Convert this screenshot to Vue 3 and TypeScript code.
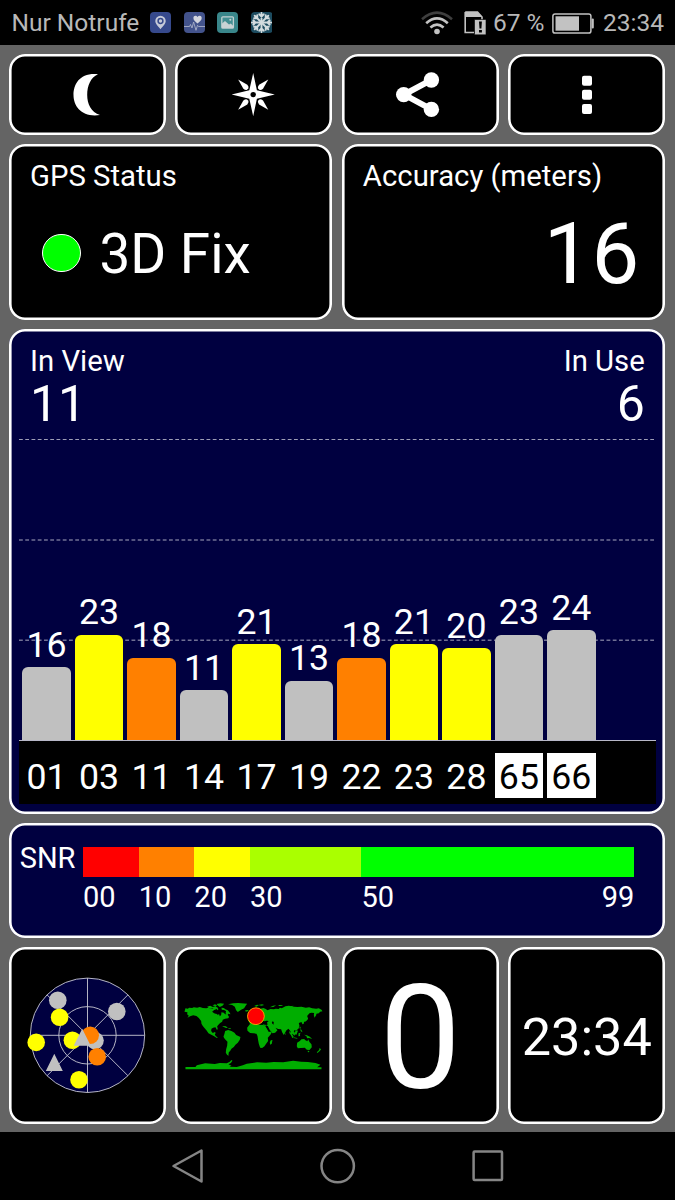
<script setup lang="ts">
interface Satellite {
  id: string
  snr: number
  color: string
  boxed?: boolean
}

const GREY = '#c0c0c0'
const YELLOW = '#ffff00'
const ORANGE = '#ff8000'
const PX_PER_DB = 4.6

const satellites: Satellite[] = [
  { id: '01', snr: 16, color: GREY },
  { id: '03', snr: 23, color: YELLOW },
  { id: '11', snr: 18, color: ORANGE },
  { id: '14', snr: 11, color: GREY },
  { id: '17', snr: 21, color: YELLOW },
  { id: '19', snr: 13, color: GREY },
  { id: '22', snr: 18, color: ORANGE },
  { id: '23', snr: 21, color: YELLOW },
  { id: '28', snr: 20, color: YELLOW },
  { id: '65', snr: 23, color: GREY, boxed: true },
  { id: '66', snr: 24, color: GREY, boxed: true },
]

const scale = [
  { label: '00', span: 10, color: '#ff0000' },
  { label: '10', span: 10, color: '#ff8000' },
  { label: '20', span: 10, color: '#ffff00' },
  { label: '30', span: 20, color: '#aaff00' },
  { label: '50', span: 49, color: '#00ff00', end: '99' },
]

const skyDots = [
  { x: 57.8, y: 1000.2, color: GREY },
  { x: 116.8, y: 1011.5, color: GREY },
  { x: 59.6, y: 1017.3, color: YELLOW },
  { x: 36.2, y: 1042.4, color: YELLOW },
  { x: 72.4, y: 1040.3, color: YELLOW },
  { x: 95, y: 1040.6, color: GREY },
  { x: 90.2, y: 1035.3, color: ORANGE },
  { x: 97.2, y: 1056.8, color: ORANGE },
  { x: 79, y: 1079.8, color: YELLOW },
]
</script>

<template>
  <div class="phone">
    <header class="status">
      <span class="carrier">Nur Notrufe</span>
      <div class="notes">
        <svg viewBox="0 0 21 21" class="note">
          <rect width="21" height="21" rx="4" fill="#36498c" />
          <path d="M10.5 17.2C8 13.8 5.3 11.6 5.3 8.9a5.2 5.2 0 0 1 10.4 0c0 2.700-2.700 4.900-5.200 8.300z" fill="#c6cad8" />
          <circle cx="10.500" cy="9" r="2.400" fill="none" stroke="#36498c" stroke-width="1.500" />
        </svg>
        <svg viewBox="0 0 21 21" class="note">
          <rect width="21" height="21" rx="4" fill="#43538c" />
          <path d="M13.500 11.500C11 9.200 9.400 8 9.400 6c0-2.700 3-3.100 4.100-1.100 1.200-2 4.200-1.600 4.200 1.100 0 2-1.700 3.200-4.200 5.500z" fill="#d4d6df" />
          <path d="M0 14.500h5.500l1-2 1.500 3.500 1.600-6 2.400 8.300 1.500-5 1 1.200H21" fill="none" stroke="#a9b0c8" stroke-width=".9" />
        </svg>
        <svg viewBox="0 0 21 21" class="note">
          <rect width="21" height="21" rx="4" fill="#39868a" />
          <rect x="4.800" y="4.800" width="11.600" height="11.400" rx="1" fill="#438f92" stroke="#c2d0d1" stroke-width="1.300" />
          <path d="M5 16v-4.500l3-2.500 4 3.500 1.800-1 2.400 2.400V16z" fill="#c9d3d4" />
          <circle cx="13.300" cy="7.800" r="1" fill="#c9d3d4" />
        </svg>
        <svg viewBox="0 0 21 21" class="note">
          <rect width="22" height="21" rx="4" fill="#1c4b5f" />
          <g stroke="#d3dcdf" stroke-width="1.900" stroke-linecap="round" fill="none">
            <path v-for="a in [0, 45, 90, 135, 180, 225, 270, 315]" :key="a" :transform="`rotate(${a} 10.500 10.500)`" d="M10.500 10.500V.9M8.300 2.300l2.200 2.300 2.200-2.300" />
          </g>
        </svg>
      </div>
      <svg class="wifi" viewBox="0 0 32 24">
        <g fill="none" stroke-width="2.600">
          <path d="M1 8.200Q16-4.800 31 8.200" stroke="#3e3e3e" />
          <path d="M5.200 12.300Q16 2.600 26.800 12.300" stroke="#c2c2c2" />
          <path d="M9.400 16.600Q16 10.800 22.600 16.600" stroke="#c2c2c2" />
        </g>
        <circle cx="16" cy="20.500" r="2.800" fill="#c2c2c2" />
      </svg>
      <svg class="sim" viewBox="0 0 22 24">
        <path d="M1.200 1v20.500H10M1.200 1h12.300L18 6v3" fill="none" stroke="#c2c2c2" stroke-width="1.600" />
        <path d="M1 1h12.500L18 5.800V6H1z" fill="#c2c2c2" />
        <path d="M10.500 8.500H22v15.300H10.500z" fill="#c2c2c2" stroke="#000" stroke-width=".6" />
        <path d="M15 10.500h2.900l-.5 7h-1.900zM15 19h2.900v2.400H15z" fill="#000" />
      </svg>
      <span class="percent">67 %</span>
      <svg class="battery" viewBox="0 0 42 21">
        <rect x=".9" y=".9" width="38" height="19.200" rx="2.200" fill="none" stroke="#c2c2c2" stroke-width="1.500" />
        <rect x="3.500" y="3.300" width="23.500" height="14.400" fill="#c2c2c2" />
        <rect x="39.600" y="5.500" width="2.200" height="10" rx="1" fill="#c2c2c2" />
      </svg>
      <span class="clock">23:34</span>
    </header>

    <main class="board">
      <button class="card tool" aria-label="Night mode">
        <svg viewBox="0 0 157 81"><path d="M89 20.300C71 18.500 64.500 30 64.500 41c0 12 9 22.700 26.500 20C82 58 78.200 50 78.200 41S81.500 23.500 89 20.300z" fill="#fff" /></svg>
      </button>
      <button class="card tool" aria-label="Compass">
        <svg viewBox="0 0 157 81">
          <g fill="#fff">
            <path d="M78.200 19l3.700 17.300L99.800 40.600 81.900 44.700 78.200 62.200 74.300 44.700 56.600 40.600 74.300 36.300z" />
            <path v-for="a in [45, 135, 225, 315]" :key="a" :transform="`rotate(${a} 78.200 40.600)`" d="M78.200 19.300L81 29.500q-.3 2.800-1.800 3.300h-2q-1.500-.5-1.800-3.300z" />
          </g>
          <circle cx="78.200" cy="40.600" r="2.700" fill="#000" />
        </svg>
      </button>
      <button class="card tool" aria-label="Share">
        <svg viewBox="0 0 157 81">
          <path d="M89.500 25.800L62 40.600l27.500 14.800" fill="none" stroke="#fff" stroke-width="6" />
          <g fill="#fff"><circle cx="89.400" cy="26" r="7.700" /><circle cx="61.700" cy="40.600" r="7.700" /><circle cx="89.400" cy="55.400" r="7.700" /></g>
        </svg>
      </button>
      <button class="card tool" aria-label="More">
        <svg viewBox="0 0 157 81">
          <g fill="#fff"><rect x="74" y="21.800" width="10" height="10" rx="2" /><rect x="74" y="35.800" width="10" height="10" rx="2" /><rect x="74" y="50" width="10" height="10" rx="2" /></g>
        </svg>
      </button>

      <section class="card half">
        <div class="title">GPS Status</div>
        <div class="fix"><i class="led"></i><span>3D Fix</span></div>
      </section>
      <section class="card half">
        <div class="title">Accuracy (meters)</div>
        <div class="meters">16</div>
      </section>

      <section class="card full navy">
        <div class="counts">
          <div><div class="title">In View</div><div class="count">11</div></div>
          <div class="right"><div class="title">In Use</div><div class="count">6</div></div>
        </div>
        <div class="plot">
          <svg class="grid" viewBox="0 0 637 302">
            <g stroke="#fff" stroke-dasharray="3.800 2.450">
              <path d="M0 .5H635" opacity=".62" />
              <path d="M0 101H635" stroke-width="1.600" opacity=".44" />
              <path d="M0 201.300H635" stroke-width="1.600" opacity=".44" />
            </g>
          </svg>
          <div v-for="s in satellites" :key="s.id" class="column">
            <span class="value">{{ s.snr }}</span>
            <div class="bar" :style="{ height: s.snr * PX_PER_DB + 'px', background: s.color }"></div>
          </div>
        </div>
        <div class="axis">
          <span v-for="s in satellites" :key="s.id" class="tag" :class="{ boxed: s.boxed }">{{ s.id }}</span>
        </div>
      </section>

      <section class="card full navy legend">
        <span class="snr">SNR</span>
        <div class="ramp">
          <div v-for="s in scale" :key="s.label" class="step" :style="{ flexGrow: s.span }">
            <div class="swatch" :style="{ background: s.color }"></div>
            <div class="marks"><span>{{ s.label }}</span><span v-if="s.end">{{ s.end }}</span></div>
          </div>
        </div>
      </section>

      <section class="card tile">
        <svg viewBox="9 947 157 177">
          <circle cx="87.500" cy="1035.300" r="57.200" fill="#000040" />
          <g fill="none" stroke="#c8c8d4" stroke-width=".9">
            <circle cx="87.500" cy="1035.300" r="57.200" />
            <circle cx="87.500" cy="1035.300" r="28.700" />
            <path d="M30.300 1035.300h114.400M87.500 978.100v114.400M47.100 994.900l80.800 80.800M127.900 994.900l-80.800 80.800" />
          </g>
          <circle v-for="(d, i) in skyDots" :key="i" :cx="d.x" :cy="d.y" r="8.800" :fill="d.color" />
          <path d="M54.300 1053.700l8.500 17.200h-17zM82.200 1028.800l8.500 17h-17z" fill="#c0c0c0" />
        </svg>
      </section>
      <section class="card tile">
        <svg viewBox="175.200 947 157 177">
          <g transform="translate(175 990) scale(.33333)">
            <g fill="#00ad00">
              <path d="M32 55l7 1 4-3 9 1 5-2 10 1 8-2 9 3 10 1 7-2 5 4 8-1 4-5 5 4 6-1 2 4-5 4-3 7 5 5 5-1 2 6 4-4 1-8 7 1 4 5 6-1 6 9-3 4-9 1-7 3-2 6-6 4-5 5-4 5 2 9-3 1-4-7-7 1-5 3-1 7 5 6 6-3 3 3-3 4 3 6 6 3-3 2-8-5-7-4-10-5-5-8-7-8-5-6-4-7-1-8-7-9-7-6-10-2-9 3-8 4 4-6-5-4 1-6-9-2z" />
              <path d="M97 50l9-3 8 4 8-2 8 5-6 3-9-2-10 2zM113 46l8-3 6 4-6 2zM125 42l12-2 11 1-5 6-8 4-5-4zM140 53l7 1 5 4 7 3 6 7 2 5-6-2-3 4-6-5 2-6-6-4-7-1z" />
              <path d="M160 43l15-3 15-1 27 2-5 7-4 7-9 4-10 7-5-5-4-11-8-5z" />
              <path d="M142 108l11 1 6 4-5 1-7-3zM160 114h7l2 2h-7z" />
              <path d="M151 123l9-3 10 3 9 5 5 7 13 6-2 8-6 9-7 6-5 7-7 5-4 7-4 4-1 8 2 2-6-2-4-7 1-10 3-11 1-12-8-8-4-7 3-9z" />
              <path d="M211 61l9-1 1 3-8 2zM219 90l5-3 1-6-3-4 3-4 4 4 4-3 6 1 2-5 3-1 2-9 8-3 12-3 7 3 5 4 9-4 10 1 6-2 9 1 3-4 6 2 11-6 10-2 16 3 10 1 12-1 13 3 10-1 9 3 12 1 8-1 8 4 3 5-7 1-4 5-7 1-1 5-5 7-2-8 1-6-8-1-6 2-7 8 3 8-7 8-5-1-1 8-4 2-3-7-8 3 2 9-3 8-8 6-4-2-2 5 4 7-2 5-6-6-2 4 5 10-4-2-4-10-1-9-6-8-6 5-5 9-3 5-5-8-3-9-9-1-8-4 6 8-7 7-8 2-10-15-3-7-12-1-4-4-6-3-6 3-4-4-6 3-5 6-7 1z" />
              <path d="M225 103l11-3 9 1 6 3 14 1 6 2 8 14 3 5 10-2-4 9-9 10 1 10-6 8-5 8-7 5-6-1-4-12-2-10-2-13-3-7-9-1-10-1-8-7-1-9z" />
              <path d="M276 97l10-6 8 8 1 10 4 3-3 8-10 2-6-13zM288 151l5-1-2 11-5 3-1-7zM238 48l9-4 5 2-7 4zM250 45l12-2 6 2-8 2zM285 52l10-5 9-1-8 5zM310 45h10l5 2-12 1zM340 50l16-3-5 4z" />
              <path d="M330 128l3 5-2 1zM343 123l8 8 6 10-3 1-10-12zM356 142l11 2 1 2-11-2zM359 126l8-6 2 4-4 10-7-1zM371 130l7-2-3 4 1 6-5 1zM376 118l4 1 3 8-5-3zM388 134l8 2 9 4 7 7-9-3-6 1-2-6zM374 111l3-1 1 5-3 1zM386 93l6-4 5-6 2 4-6 7-6 2z" />
              <path d="M367 158l8-5 5-5 8-1 4 4 6 3 2-6 4 8 6 7 1 9-7 8-8-1-6-6-12 1-9 1-3-6zM399 182l5 1-2 4-3-1zM434 174l5 4-4 5-7 6-2-2 7-7z" />
              <path d="M32 231h30l4-5 25-6 29 2 15-3 21 1 9-5 5-5 3 2-5 7-7 4 9 4-6 3 22 1 18-5 12-5 31-4 27 1 23-2 28 1 30-5 24 3 20 1 23 3 15 5-6 5-4 3h13v6H32z" />
            </g>
            <g fill="#000">
              <path d="M118 60l8-3 3 6-4 9-7-2-6-5zM151 49l10 2 6 8 6 8-6-2-8-7zM240 91l9 1 7 5 5 3 3-7 6 1 5-2 7 1-5 4 1 8-8-1-18-5-10-2-5-2zM274 104l8 14-2 1-7-13zM293 94l4 2-1 8-5-5z" />
            </g>
          </g>
          <circle cx="256.100" cy="1016.200" r="8.400" fill="#ff0000" stroke="#ffaa00" stroke-width=".9" />
        </svg>
      </section>
      <section class="card tile speed">0</section>
      <section class="card tile time">23:34</section>
    </main>

    <nav class="keys">
      <svg viewBox="0 0 36 36"><path d="M31.500 2.500v31L3.500 18z" /></svg>
      <svg viewBox="0 0 36 36"><circle cx="17.700" cy="18.100" r="16.200" /></svg>
      <svg viewBox="0 0 36 36"><rect x="3.600" y="3.600" width="28.400" height="28.400" rx="1" /></svg>
    </nav>
  </div>
</template>

<style>
body {
  margin: 0;
  background: #000;
}
</style>

<style scoped>
.phone {
  width: 675px;
  height: 1200px;
  display: flex;
  flex-direction: column;
  overflow: hidden;
  background: #000;
  color: #fff;
  font-family: Roboto, "Liberation Sans", sans-serif;
}
.status {
  height: 45px;
  flex: none;
  display: flex;
  align-items: center;
  box-sizing: border-box;
  padding-left: 11.500px;
  color: #b8b8b8;
  font-size: 24.500px;
  line-height: 46px;
  white-space: nowrap;
}
.status svg {
  display: block;
  flex: none;
}
.carrier {
  width: 138.500px;
}
.notes {
  display: flex;
  gap: 12.700px;
  width: 271px;
}
.note {
  width: 21px;
  height: 21px;
}
.wifi {
  width: 32px;
  height: 24px;
}
.sim {
  width: 22px;
  height: 24px;
  margin-left: 11px;
}
.percent {
  width: 59px;
  margin-left: 7px;
}
.battery {
  width: 42px;
  height: 21px;
  margin-top: 2px;
}
.clock {
  margin-left: 9px;
}
.board {
  height: 1087px;
  flex: none;
  box-sizing: border-box;
  padding: 8.700px 9px 0;
  display: grid;
  grid-template-columns: repeat(4, 157px);
  grid-template-rows: 81px 176.300px 485.200px 114.500px 177px;
  gap: 9.100px 9.430px;
  background: #646464;
}
.card {
  position: relative;
  box-sizing: border-box;
  border: 0;
  padding: 0;
  border-radius: 16px;
  background: #000;
  box-shadow: inset 0 0 0 2.600px #fff;
  overflow: hidden;
  color: inherit;
}
.half {
  grid-column: span 2;
  padding: 15.400px 21px 0;
}
.full {
  grid-column: span 4;
}
.navy {
  background: #000040;
}
.tool svg,
.tile svg {
  display: block;
  width: 100%;
  height: 100%;
}
.title {
  font-size: 29.300px;
  line-height: 34px;
  white-space: nowrap;
}
.fix {
  display: flex;
  align-items: center;
  gap: 19px;
  margin-top: 29px;
  padding-left: 12px;
  font-size: 54.800px;
  line-height: 64px;
}
.led {
  width: 36.500px;
  height: 36.500px;
  margin-top: -2px;
  border: 1px solid #fff;
  border-radius: 50%;
  background: #00ff00;
}
.meters {
  margin-top: 11px;
  padding-right: 5px;
  font-size: 85px;
  line-height: 100px;
  text-align: right;
}
.counts {
  display: flex;
  justify-content: space-between;
  box-sizing: border-box;
  height: 110.300px;
  padding: 15px 20.500px 0 21px;
}
.count {
  font-size: 50px;
  line-height: 52px;
}
.right {
  text-align: right;
}
.plot {
  position: relative;
  display: flex;
  align-items: flex-end;
  gap: 4.200px;
  box-sizing: border-box;
  height: 302px;
  margin: 0 9.600px 0 10px;
  padding-left: 3.400px;
  border-bottom: 1px solid #b8b8c8;
}
.grid {
  position: absolute;
  left: 0;
  top: 0;
  width: 637px;
  height: 302px;
}
.column {
  position: relative;
  display: flex;
  flex-direction: column;
  align-items: center;
  width: 48.300px;
}
.value {
  margin-bottom: 4.200px;
  font-size: 35.700px;
  line-height: 36px;
}
.bar {
  width: 100%;
  border-radius: 6px 6px 0 0;
}
.axis {
  display: flex;
  gap: 4.200px;
  box-sizing: border-box;
  height: 62.500px;
  margin: 0 9.600px 0 10px;
  padding: 12px 0 0 3.400px;
  background: #000;
}
.tag {
  width: 48.300px;
  height: 45px;
  font-size: 35.700px;
  line-height: 48.500px;
  text-align: center;
}
.boxed {
  background: #fff;
  color: #000;
}
.legend {
  display: flex;
  padding: 17.100px 31px 0 10.700px;
  font-size: 29px;
  line-height: 34px;
}
.snr {
  width: 63.300px;
}
.ramp {
  display: flex;
  flex: 1;
  padding-top: 6.200px;
}
.step {
  flex: 0 1 0;
  min-width: 0;
}
.swatch {
  height: 30.600px;
}
.marks {
  display: flex;
  justify-content: space-between;
  margin-top: 2.400px;
}
.tile {
  display: flex;
  align-items: center;
  justify-content: center;
}
.speed {
  padding-top: 5px;
  font-size: 145px;
  line-height: 172px;
}
.time {
  padding-top: 3px;
  font-size: 52.300px;
  line-height: 174px;
}
.keys {
  flex: 1;
  display: grid;
  grid-template-columns: repeat(3, 150px);
  justify-content: center;
  justify-items: center;
  align-items: center;
}
.keys svg {
  width: 36px;
  height: 36px;
  fill: none;
  stroke: #858585;
  stroke-width: 2.500;
  stroke-linejoin: round;
}
</style>
